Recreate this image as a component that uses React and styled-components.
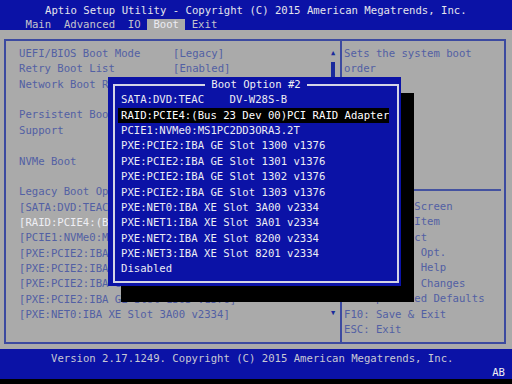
import React from "react";
import styled, { createGlobalStyle } from "styled-components";

const BLUE = "#0b12a6";
const GRAY = "#aaaaaa";
const INK = "#5260a4";
const LINE = 15.36;

const GlobalStyle = createGlobalStyle`
  html, body { margin: 0; padding: 0; background: #000; }
  body {
    font-family: "DejaVu Sans Mono", "Liberation Mono", monospace;
    font-size: 10.62px;
  }
`;

const Screen = styled.div`
  position: relative;
  width: 512px;
  height: 384px;
  display: flex;
  flex-direction: column;
  background: ${GRAY};
  overflow: hidden;
  white-space: pre;
`;

const Header = styled.header`
  height: 30px;
  background: ${BLUE};
  display: flex;
  flex-direction: column;
`;

const Title = styled.div`
  padding: 3px 0 0 45px;
  height: 16px;
  line-height: 16px;
  color: #e4e4ec;
`;

const Tabs = styled.nav`
  display: flex;
  height: 11px;
  line-height: 11px;
  padding-left: 19.2px;
`;

const Tab = styled.span`
  padding: 0 6.4px;
  color: ${(p) => (p.$active ? "#ececf2" : "#c4c4cc")};
  background: ${(p) => (p.$active ? GRAY : "transparent")};
`;

const Body = styled.main`
  height: 319px;
  box-sizing: border-box;
  padding: 9px 6px 5px 4px;
  display: flex;
`;

const Frame = styled.div`
  flex: 1;
  border: 2px solid #3c4aa0;
  display: grid;
  grid-template-columns: 334px 1fr;
`;

const LeftPane = styled.section`
  display: flex;
`;

const List = styled.div`
  flex: 1;
  padding: 5px 0 0 13px;
  overflow: hidden;
`;

const Row = styled.div`
  display: grid;
  grid-template-columns: 154px 1fr;
  height: ${LINE}px;
  line-height: ${LINE}px;
  color: ${(p) => (p.$selected ? "#efeff4" : INK)};
  overflow: hidden;
`;

const Wide = styled.span`
  grid-column: 1 / 3;
`;

const Scroll = styled.div`
  width: 8px;
  margin-right: 3px;
  padding: 5px 0 21px;
  display: flex;
  flex-direction: column;
  align-items: center;
  color: #1a2a9c;
`;

const Arrow = styled.div`
  height: ${LINE}px;
  line-height: ${LINE}px;
  font-size: 7px;
`;

const Thumb = styled.div`
  width: 4px;
  height: 40px;
  margin-top: 1px;
  background: #1a2a9c;
`;

const Spacer = styled.div`
  flex: 1;
`;

const RightPane = styled.aside`
  border-left: 2px solid #3c4aa0;
  display: flex;
  flex-direction: column;
`;

const HelpTop = styled.div`
  height: 148px;
  padding: 5px 0 0 2px;
  box-sizing: border-box;
`;

const HelpRule = styled.div`
  height: 2px;
  margin-right: 3px;
  background: #4452a0;
`;

const HelpKeys = styled.div`
  padding: 8px 0 0 2px;
`;

const HelpLine = styled.div`
  height: ${LINE}px;
  line-height: ${LINE}px;
  color: ${INK};
`;

const Footer = styled.footer`
  height: 30px;
  background: ${BLUE};
  display: flex;
  flex-direction: column;
  padding-top: 2px;
  box-sizing: border-box;
`;

const Version = styled.div`
  line-height: 15px;
  padding-left: 51px;
  color: #c8c8d4;
`;

const Badge = styled.div`
  line-height: 13px;
  text-align: right;
  padding-right: 7px;
  color: #f0f0f4;
`;

const BottomEdge = styled.div`
  height: 5px;
  background: #000;
`;

/* Boot option popup, laid over the page */
const Popup = styled.div`
  position: absolute;
  left: 108px;
  top: 77px;
  width: 293px;
  height: 209px;
  box-sizing: border-box;
  padding: 7px 2px 3px 5px;
  background: ${BLUE};
  box-shadow: 13px 16px 0 #000;
`;

const PopupFrame = styled.div`
  height: 100%;
  box-sizing: border-box;
  border: 2px solid #d4d4e6;
  display: flex;
  flex-direction: column;
`;

const PopupTitle = styled.div`
  align-self: center;
  margin-top: -9px;
  padding: 0 6px;
  height: ${LINE}px;
  line-height: ${LINE}px;
  background: ${BLUE};
  color: #f0f0f4;
`;

const Options = styled.div`
  margin: 0 8px 0 3px;
`;

const Option = styled.div`
  height: ${LINE}px;
  line-height: ${LINE}px;
  padding-left: 3px;
  color: ${(p) => (p.$active ? "#ffffff" : "#ececf4")};
  background: ${(p) => (p.$active ? "#000" : "transparent")};
  overflow: hidden;
`;

const tabs = ["Main", "Advanced", "IO", "Boot", "Exit"];

const rows = [
  ["UEFI/BIOS Boot Mode", "[Legacy]"],
  ["Retry Boot List", "[Enabled]"],
  ["Network Boot Retry", "[Enabled]"],
  ["", ""],
  ["Persistent Boot", "[Disabled]"],
  ["Support", ""],
  ["", ""],
  ["NVMe Boot", "[Enabled]"],
  ["", ""],
  ["Legacy Boot Option Priorities", ""],
];

const bootItems = [
  "[SATA:DVD:TEAC    DV-W28S-B]",
  "[RAID:PCIE4:(Bus 23 Dev 00)PCI RAID Adapter]",
  "[PCIE1:NVMe0:MS1PC2DD3ORA3.2T]",
  "[PXE:PCIE2:IBA GE Slot 1300 v1376]",
  "[PXE:PCIE2:IBA GE Slot 1301 v1376]",
  "[PXE:PCIE2:IBA GE Slot 1302 v1376]",
  "[PXE:PCIE2:IBA GE Slot 1303 v1376]",
  "[PXE:NET0:IBA XE Slot 3A00 v2334]",
];

const help = [
  "→←: Select Screen",
  "↑↓: Select Item",
  "Enter: Select",
  "+/-: Change Opt.",
  "F1: General Help",
  "F7: Discard Changes",
  "F9: Optimized Defaults",
  "F10: Save & Exit",
  "ESC: Exit",
];

const options = [
  "SATA:DVD:TEAC    DV-W28S-B",
  "RAID:PCIE4:(Bus 23 Dev 00)PCI RAID Adapter",
  "PCIE1:NVMe0:MS1PC2DD3ORA3.2T",
  "PXE:PCIE2:IBA GE Slot 1300 v1376",
  "PXE:PCIE2:IBA GE Slot 1301 v1376",
  "PXE:PCIE2:IBA GE Slot 1302 v1376",
  "PXE:PCIE2:IBA GE Slot 1303 v1376",
  "PXE:NET0:IBA XE Slot 3A00 v2334",
  "PXE:NET1:IBA XE Slot 3A01 v2334",
  "PXE:NET2:IBA XE Slot 8200 v2334",
  "PXE:NET3:IBA XE Slot 8201 v2334",
  "Disabled",
];

export default function App() {
  return (
    <>
      <GlobalStyle />
      <Screen>
        <Header>
          <Title>Aptio Setup Utility - Copyright (C) 2015 American Megatrends, Inc.</Title>
          <Tabs>
            {tabs.map((t) => (
              <Tab key={t} $active={t === "Boot"}>{t}</Tab>
            ))}
          </Tabs>
        </Header>

        <Body>
          <Frame>
            <LeftPane>
              <List>
                {rows.map(([label, value], i) => (
                  <Row key={i}>
                    <span>{label}</span>
                    <span>{value}</span>
                  </Row>
                ))}
                {bootItems.map((item, i) => (
                  <Row key={item} $selected={i === 1}>
                    <Wide>{item}</Wide>
                  </Row>
                ))}
              </List>
              <Scroll>
                <Arrow>▲</Arrow>
                <Thumb />
                <Spacer />
                <Arrow>▼</Arrow>
              </Scroll>
            </LeftPane>

            <RightPane>
              <HelpTop>
                <HelpLine>Sets the system boot</HelpLine>
                <HelpLine>order</HelpLine>
              </HelpTop>
              <HelpRule />
              <HelpKeys>
                {help.map((h) => (
                  <HelpLine key={h}>{h}</HelpLine>
                ))}
              </HelpKeys>
            </RightPane>
          </Frame>
        </Body>

        <Footer>
          <Version>Version 2.17.1249. Copyright (C) 2015 American Megatrends, Inc.</Version>
          <Badge>AB</Badge>
        </Footer>
        <BottomEdge />

        <Popup>
          <PopupFrame>
            <PopupTitle>Boot Option #2</PopupTitle>
            <Options>
              {options.map((o, i) => (
                <Option key={o} $active={i === 1}>{o}</Option>
              ))}
            </Options>
          </PopupFrame>
        </Popup>
      </Screen>
    </>
  );
}
